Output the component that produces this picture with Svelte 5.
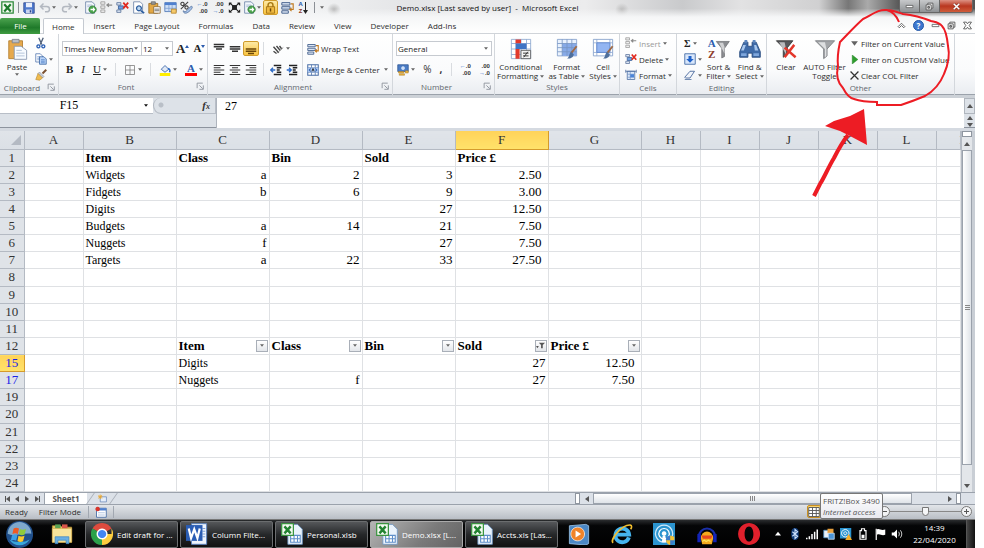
<script lang="ts">
  type Shape = [d: string, fill: string, stroke?: string, width?: number];

  // Every glyph is drawn on a 16 x 16 grid.
  const icons: Record<string, Shape[]> = {
    excel: [
      ['M1 1h14v14H1z', '#f4faf1', '#2f8a3c', 1.6],
      ['M4 4l8 9M12 4l-8 9', 'none', '#1d7a2c', 2.6],
    ],
    save: [
      ['M1 1h14v14H3l-2-2z', '#4d78cc', '#2b4489', 1],
      ['M4 1h8v6H4z', '#e9eefb'],
      ['M4 10h8v5H4z', '#c9d4ee'],
      ['M9 11h2v3H9z', '#2b4489'],
    ],
    undo: [['M3 6h7a4 3.500 0 0 1 0 7H8M6 2L2 6l4 4', 'none', '#b3b8c0', 2]],
    redo: [['M13 6H6a4 3.500 0 0 0 0 7h2M10 2l4 4-4 4', 'none', '#b3b8c0', 2]],
    refresh: [
      ['M2 1h8l3 3v11H2z', '#f3f7fc', '#6a83a6', 1],
      ['M4 5h6M4 7h6', 'none', '#9fb2cc', 1],
      ['M10.500 6a4.500 4.500 0 1 0 .1 0z', '#4aa44b', '#2e7c33', 1],
      ['M8 9.500h3V7.500l3 3-3 3v-2H8z', '#fff'],
    ],
    insert: [
      ['M1 1h5v3H1zM1 6h5v3H1zM1 11h5v3H1z', '#eee', '#9a9a9a', 1],
      ['M15 5H9M11 3L8.500 5l2.500 2', 'none', '#8a8a8a', 1.5],
    ],
    remove: [
      ['M1 2h5v3H1zM1 11h5v3H1z', '#dbe6f5', '#5b7299', 1],
      ['M3 6h6v4H3z', '#6fa0e0', '#385d95', 1],
      ['M9 2l6 7M15 2L9 9', 'none', '#e0281e', 2.2],
    ],
    preview: [
      ['M2 1h8l3 3v11H2z', '#fff', '#6a83a6', 1],
      ['M8.500 6a3 3 0 1 0 .1 0z', '#bcd8f2', '#2f5f9f', 1.6],
      ['M11 12l4 3', 'none', '#2f5f9f', 2],
    ],
    pasteSpecial: [
      ['M1 3h11v12H1z', '#e2a744', '#9b6a1d', 1],
      ['M4 1h5v3H4z', '#9c9c9c', '#666', 1],
      ['M7 7h8v8H7z', '#fff', '#8a6630', 1],
      ['M8 10h6M8 12h6', 'none', '#555', 1],
    ],
    format: [
      ['M1 2h14v11H1z', '#cfe0f7', '#4a74b5', 1],
      ['M1 2h14v3H1z', '#4f80cf'],
      ['M1 9h14M6 5v8M10 5v8', 'none', '#7f9fd1', 1],
      ['M9 10h6v5H9z', '#f5c96b', '#b78424', 1],
    ],
    percentStyle: [
      ['M3 1.500a2 2 0 1 0 .1 0zM8 6a2 2 0 1 0 .1 0zM10 1L1 10', 'none', '#444', 1.4],
      ['M4 12c3 3 5-1 7-3s3-3 4-2c1 2-5 8-8 8-2 0-3-1-3-3z', '#a9c3e8', '#53719f', 1],
    ],
    fit: [
      ['M5 5h6v6H5z', '#222'],
      ['M2 2l12 12M14 2L2 14', 'none', '#222', 1.5],
      ['M1 2h4L1 6zM15 2v4l-4-4zM1 14v-4l4 4zM15 14h-4l4-4z', '#222'],
    ],
    lock: [
      ['M5 8V5a3 3 0 0 1 6 0v3', 'none', '#a87812', 1.8],
      ['M3 7h10v8H3z', '#eeb840', '#9a6a10', 1],
      ['M8 9v4', 'none', '#70490a', 1.8],
    ],
    wrap: [
      ['M1 2h10v3H1zM1 7h10v3H1zM1 12h8v3H1z', '#dbe6f5', '#49648f', 1.2],
      ['M12 3.500h3v7h-3M13 8.500l-2 2 2 2', 'none', '#c0791e', 1.4],
    ],
    merge: [
      ['M1 1h14v14H1z', '#fff', '#4a6fa8', 1.4],
      ['M1 5h14M1 11h14M6 1v4M11 1v4M6 11v4M11 11v4', 'none', '#4a6fa8', 1],
      ['M1 5h14v6H1z', '#a9c6f0'],
      ['M5 6L3 8l2 2M11 6l2 2-2 2', 'none', '#2c5cae', 1.4],
      ['M6.500 10L8 6l1.500 4', 'none', '#222', 1.2],
    ],
    paste: [
      ['M2 2h10v13H2z', '#e6a94d', '#b07a29', .6],
      ['M4.500 1h5v2.500h-5z', '#b9bec7', '#7c828d', .6],
      ['M6 6h5l4 3v6.500H6z', '#f7fbff', '#8192ad', .6],
      ['M7.500 9h4M7.500 11h6M7.500 13h6', 'none', '#b3c4da', .7],
    ],
    cut: [
      ['M5 1l4 9M11 1L7 10', 'none', '#4f5f78', 1.8],
      ['M4.500 10.500a2 2 0 1 0 .1 0zM11 10.500a2 2 0 1 0 .1 0z', 'none', '#2f62b5', 1.8],
    ],
    copy: [
      ['M1 1h6l3 3v8H1z', '#fff', '#4c72ac', 1],
      ['M3 5h4M3 7h4M3 9h4', 'none', '#6e93cc', 1],
      ['M6 5h6l3 3v7H6z', '#b9d3f7', '#34609f', 1],
      ['M8 9h5M8 11h5M8 13h5', 'none', '#4f7fc6', 1],
    ],
    painter: [
      ['M10 6l5-5', 'none', '#7a5132', 2.6],
      ['M6 4l6 6-2 2-6-6z', '#c7ccd6', '#7e8592', .7],
      ['M4 6l6 6-4 3-5-1z', '#f0bc4f', '#b17d1c', .7],
    ],
    top: [['M1 2h14M1 5h14M4 8h8', 'none', '#333', 1.7]],
    middle: [['M1 5h14M1 8h14M4 11h8', 'none', '#333', 1.7]],
    bottom: [['M1 8h14M1 11h14M4 14h8', 'none', '#6b4708', 1.7]],
    left: [['M1 2h14M1 5h9M1 8h14M1 11h9M1 14h14', 'none', '#333', 1.5]],
    center: [['M1 2h14M4 5h8M1 8h14M4 11h8M1 14h14', 'none', '#333', 1.5]],
    right: [['M1 2h14M6 5h9M1 8h14M6 11h9M1 14h14', 'none', '#333', 1.5]],
    outdent: [
      ['M5 2h10M9 5h6M9 8h4M9 11h6M5 14h10', 'none', '#222', 1.8],
      ['M7 8H1M4 5L1 8l3 3', 'none', '#2c69c4', 1.8],
    ],
    indent: [
      ['M4 2h11M9 5h6M9 8h4M9 11h6M4 14h11', 'none', '#222', 1.8],
      ['M1 8h6M4 5l3 3-3 3', 'none', '#2c69c4', 1.8],
    ],
    orient: [
      ['M2 11l4 3M2 5l7 8M6 4l5 6M10 4l3 4', 'none', '#444', 1.8],
      ['M6 14l9-8', 'none', '#888', 1.2],
    ],
    borders: [['M2 2h12v12H2zM8 2v12M2 8h12', 'none', '#777', 1]],
    fill: [
      ['M3 7l5-5 5 5-5 4z', '#dfe8f5', '#3f69a9', 1.2],
      ['M12 6c3 1 3 3 2 5', 'none', '#2c69c4', 2],
      ['M1 12h14v4H1z', '#ffee00'],
    ],
    money: [
      ['M1 1h14v9H1z', '#4a7cc4', '#2a5391', 1],
      ['M8 3a2.500 2.500 0 1 0 .1 0z', '#cfe0f7'],
      ['M2 10h7v2H2zM3 13h7v2H3z', '#eab544', '#a87414', .6],
      ['M11 9h4v3h-4z', '#eab544', '#a87414', .6],
    ],
    conditional: [
      ['M1 1h14v14H1z', '#fff', '#8aa6cf', .6],
      ['M1 4h14M1 8h14M1 12h14M8 1v14M12 1v14', 'none', '#8aa6cf', .6],
      ['M4 1h4v3H4zM4 8h3v7H4z', '#e2392c'],
      ['M4 4h8v4H4z', '#3f74c4'],
      ['M8 9h7v6H8z', '#f4f4f4', '#555', .6],
      ['M9.500 11h4M9.500 13h4M13 10l-3 4', 'none', '#333', .7],
    ],
    table: [
      ['M1 1h14v12H1z', '#eaf2fd', '#7f9dc8', .6],
      ['M4.500 4h10.500v9H4.500z', '#87aae8'],
      ['M1 4h14M1 7h14M1 10h14M4.500 1v12M8 1v12M11.500 1v12', 'none', '#7795c4', .6],
      ['M15 6l-4 5', 'none', '#a06a45', 1.4],
      ['M11 10l2 2c-1 3-3 3-5 3 2-1 1-3 3-5z', '#4e6f9c'],
    ],
    cell: [
      ['M1 1h14v12H1z', '#fff', '#7f9dc8', .6],
      ['M1 3.500h14M1 10.500h14M3.500 1v12M13 1v12', 'none', '#8fa9d2', .6],
      ['M3.500 3.500h9.500v7H3.500z', '#93b5f2', '#5e86cc', .6],
      ['M15 6l-4 5', 'none', '#a06a45', 1.4],
      ['M11 10l2 2c-1 3-3 3-5 3 2-1 1-3 3-5z', '#4e6f9c'],
    ],
    cellFormat: [
      ['M3 3h10v11H3z', '#dce9fa', '#46689c', 1],
      ['M3 7h10M3 11h10M7 3v11', 'none', '#7898c8', 1],
      ['M7 7h5v4H7z', '#4b85d9'],
      ['M1 1v4M15 1v4M1 3h14', 'none', '#46689c', 1],
    ],
    down: [
      ['M1 1h14v14H1z', '#d9e7fb', '#4a6fa8', 1.2],
      ['M6 4h4v4h3l-5 5-5-5h3z', '#1f62ca'],
    ],
    eraser: [
      ['M1 11l7-8h6l-6 9H2z', '#f3f6fb', '#47689c', 1.2],
      ['M1 14h9', 'none', '#47689c', 1],
    ],
    funnel: [
      ['M1 2h14l-5.500 6v5L7 15V8z', '#a3a5a8', '#77797d', .6],
      ['M3 3h5l1 5v5l-1 1V8z', '#dedfe1'],
    ],
    filterOn: [['M5 3h11l-4 4v6h-3V7zM0 9h5l-2.500 4z', '#555']],
    clearFunnel: [
      ['M1 2h12L9 7v5l-3 2V7z', '#56585c', '#333', .6],
      ['M3 3h4l1 5v4z', '#b9babd'],
      ['M7 7l8 7M14 5l-7 9', 'none', '#e3372b', 1.8],
    ],
    sortFunnel: [
      ['M6 2.500h9.500L12 7.500v6l-2 1v-7z', '#8b8d91', '#696b6f', .5],
      ['M8 3.500h3l1 3v5z', '#d0d1d3'],
    ],
    find: [
      ['M3.500 3h3v3h3V3h3l3 7v4H9.500v-3h-3v3H.5v-4z', '#3f6ba8', '#274a7c', .6],
      ['M3 5h2L3.500 9h-2zM11 5h1.500L14 9h-2.500z', '#a9c8ee'],
      ['M1.500 11h4v2h-4zM10.500 11h4v2h-4z', '#7fa7dc'],
      ['M4 1.500h2v2H4zM10 1.500h2v2h-2z', '#5d87c0'],
    ],
    grayArrow: [['M2 4h12l-6 8z', '#636363']],
    play: [['M4 0l10 8-10 8z', '#2f9e2f', '#1e7a20', .8]],
    cross: [['M1 1l14 14M15 1L1 15', 'none', '#333', 2.2]],
    launcher: [
      ['M2 11V2h10', 'none', '#8c929b', 1.6],
      ['M6 6l6 6M13 6v7H6', 'none', '#8c929b', 1.6],
    ],
    newSheet: [
      ['M4 5h11v9H4z', '#e5eefb', '#5d7db0', 1.2],
      ['M4 1v8M0 5h8M1 2l6 6M7 2L1 8', 'none', '#eca72c', 1.5],
    ],
    record: [
      ['M2 3h13v12H2z', '#fff', '#4a6fa8', 1.2],
      ['M2 3h13v3H2z', '#4f80cf'],
      ['M4 9h9M4 12h9', 'none', '#9db6da', 1],
      ['M3.500 1a3 3 0 1 0 .1 0z', '#d9352a'],
    ],
    gridView: [['M1 2h14v12H1zM1 6h14M1 10h14M6 2v12M11 2v12', '#fff', '#555', 1.2]],
    folder: [
      ['M1 2h6l1 1h7v11H1z', '#e9c765', '#c29a38', .5],
      ['M3 1h4v4H3z', '#5aa152'],
      ['M8 1h4v4H8z', '#d8564a'],
      ['M1 4h14v10H1z', '#f8e49b', '#d3ae52', .5],
      ['M3 15v-5h10v5h-2v-2.500H5V15z', '#69afe2', '#3a83bd', .5],
    ],
    orb: [
      ['M8 0a8 8 0 1 0 .1 0z', '#20508c'],
      ['M8 .6a7.200 7.200 0 0 0-7 7c4 2 10-1 14 0a7.200 7.200 0 0 0-7-7z', '#7fa9cc'],
      ['M2 11a7 7 0 0 0 12 0c-3 2-9 2-12 0z', '#37a6dc'],
      ['M4.500 4.500c1-.7 2-.6 3.200 0L7 7.700c-1-.6-2-.6-3.200 0z', '#ee5a24'],
      ['M8.300 4.800c1 .6 2.200.6 3.600 0l-.9 3.200c-1.200.6-2.200.5-3.300-.1z', '#8fcb3b'],
      ['M3.600 8.500c1-.7 2-.6 3.200 0L6 11.700c-1-.6-2-.6-3.200 0z', '#3aa0e8'],
      ['M7.400 8.800c1 .6 2.200.6 3.600 0l-.9 3.200c-1.200.6-2.200.5-3.300-.1z', '#fbc92c'],
    ],
    chrome: [
      ['M8 8L1.070 4A8 8 0 0 1 14.930 4z', '#dd4b3e'],
      ['M8 8h6.930V4A8 8 0 0 1 8 16z', '#fccd3f'],
      ['M8 8v8A8 8 0 0 1 1.070 4z', '#2ba14b'],
      ['M8 4a4 4 0 1 0 .1 0z', '#fff'],
      ['M8 5a3 3 0 1 0 .1 0z', '#4285f4'],
    ],
    word: [
      ['M4 .5h11v15H4z', '#eef4fd', '#5c83bf', .7],
      ['M12 4h2M12 6h2M12 8h2M12 10h2', 'none', '#7da1d8', .8],
      ['M0 1.500h12v11.500H0z', '#2a5db4'],
      ['M2 4l1.700 7 2.300-6.500 2.300 6.500L10 4', 'none', '#fff', 1.6],
    ],
    book: [
      ['M5 1h7l3.500 3.500v11H5z', '#eaf3fc', '#6f97c4', .6],
      ['M7 9h7v5H7zM7 11.500h7M9.500 9v5M12 9v5', '#fff', '#5f8fc9', .8],
      ['M.5.500h8.500V9H.500z', '#f4faf1', '#3b9440', .9],
      ['M2.500 2.500l4.500 5M7 2.500L2.500 7.500', 'none', '#238331', 1.8],
    ],
    player: [
      ['M1 2l12-1 2 1v13l-2 1-12-1z', '#4b87c4', '#9cc4e8', .6],
      ['M7 3a5 5 0 1 0 .1 0z', '#f0832a', '#fff', .5],
      ['M5.500 5.500l4 2.500-4 2.500z', '#fff'],
    ],
    ie: [
      ['M13 10.500A5 5 0 1 1 13.200 8.500H4', 'none', '#45b4ee', 2.8],
      ['M1.500 14.500C-1 12 8 1 14 1.500c1.500.3 1 2 .3 3', 'none', '#f3bf2f', 1.2],
    ],
    podcast: [
      ['M0 0h16v16H0z', '#2b94cf'],
      ['M8 1.500a6.200 6.200 0 1 0 .1 0z', 'none', '#cfeafb', .9],
      ['M8 4a3.800 3.800 0 1 0 .1 0z', 'none', '#fff', .9],
      ['M8 6a1.700 1.700 0 1 0 .1 0zM7 9.500h2l.6 4.500H6.400z', '#fff'],
      ['M12.500 9l3 1v2.500c0 2-1.500 3-3 3.500-1.500-.5-3-1.500-3-3.500V10z', '#3d7cc9'],
      ['M12.500 9l3 1v2.500h-3zM9.500 12.500h3V16c-1.500-.5-3-1.500-3-3.500z', '#f3c437'],
    ],
    audacity: [
      ['M2 10a6 6 0 0 1 12 0', 'none', '#1a2fa8', 1.6],
      ['M3.500 11a4.500 4.800 0 0 1 9 0l-1 4.500h-7z', '#f5a91d'],
      ['M4 9h8l-1 2.500H5z', '#e8471e'],
      ['M4.500 13.500l1.500-1 1.500 1 1.500-1 1.500 1', 'none', '#ffe25c', .8],
      ['M1 8h2.500v6H1zM12.500 8H15v6h-2.500z', '#1323b8'],
    ],
    opera: [
      ['M8 0a8 8 0 1 0 .1 0zM8 2.500c2 0 3.200 2.500 3.200 5.500S10 13.500 8 13.500 4.800 11 4.800 8 6 2.500 8 2.500z', '#e0202c'],
    ],
    caretUp: [['M4 10l4-5 4 5z', '#fff']],
    bluetooth: [
      ['M8 0c4 0 5 3 5 8s-1 8-5 8-5-3-5-8 1-8 5-8z', '#123c78'],
      ['M4.500 5l7 6L8 14V2l3.500 3-7 6', 'none', '#cfe4ff', 1.4],
    ],
    signal: [['M0 13h2v2H0zM3.500 11h2v4h-2zM7 8h2v7H7zM10.500 5h2v10h-2zM14 2h2v13h-2z', '#fff']],
    updater: [
      ['M1 3h9v10H1z', '#eaf2fa', '#4a90c8', 1],
      ['M6 1h8v6H6z', '#e9a03d'],
      ['M7 7h8v8H7z', '#4b93d6', '#d5e9f8', 1],
    ],
    podcastWarn: [
      ['M0 0h15v14H0z', '#2b94cf'],
      ['M7 2a5 5 0 1 0 .1 0zM7 5a2 2 0 1 0 .1 0z', 'none', '#fff', 1.2],
      ['M11.500 8l4.500 8H7z', '#f6ae26'],
    ],
    battery: [
      ['M4 3.500h2V1h4v2.500h2V15H4z', 'none', '#fff', 1.6],
      ['M6 9h4v4.500H6z', '#fff'],
    ],
    flag: [
      ['M3 1v15', 'none', '#fff', 1.6],
      ['M4 2c3-2 5 2 11 0v7c-5 2-7-2-11 0z', '#fff'],
    ],
    speaker: [
      ['M1 6h3l4-4v12l-4-4H1z', '#fff'],
      ['M10 5c1.500 2 1.500 4 0 6M12.500 3c2.500 3 2.500 7 0 10', 'none', '#ddd', 1.2],
    ],
    min: [['M2 6h12v4H2z', '#fff', '#555', 1.4]],
    restore: [
      ['M5 2h9v9H5z', '#fff', '#555', 1.6],
      ['M2 5h9v9H2zM5 8h3v3H5z', '#fff', '#555', 1.6],
    ],
    close: [
      ['M3 3l10 10M13 3L3 13', 'none', '#7e2b20', 4.5],
      ['M3 3l10 10M13 3L3 13', 'none', '#fff', 2.8],
    ],
    collapse: [['M2 10l6-6 6 6-2 2-4-4-4 4z', '#fff', '#444', 1.4]],
    closeDoc: [['M1 2h5l2 3 2-3h5l-4 6 4 6h-5l-2-3-2 3H1l4-6z', '#fff', '#444', 1.4]],
  };

  const quickTools = ['refresh', 'insert', 'remove', 'preview', 'pasteSpecial', 'format', 'percentStyle'];
  const tabs = ['Insert', 'Page Layout', 'Formulas', 'Data', 'Review', 'View', 'Developer', 'Add-Ins'];
  const columns = ['A', 'B', 'C', 'D', 'E', 'F', 'G', 'H', 'I', 'J', 'K', 'L', 'M'];
  const rowNumbers = [1, 2, 3, 4, 5, 6, 7, 8, 9, 10, 11, 12, 15, 17, 19, 20, 21, 22, 23, 24];

  const cells: Record<string, string> = {
    B1: 'Item', C1: 'Class', D1: 'Bin', E1: 'Sold', F1: 'Price £',
    B2: 'Widgets', C2: 'a', D2: '2', E2: '3', F2: '2.50',
    B3: 'Fidgets', C3: 'b', D3: '6', E3: '9', F3: '3.00',
    B4: 'Digits', E4: '27', F4: '12.50',
    B5: 'Budgets', C5: 'a', D5: '14', E5: '21', F5: '7.50',
    B6: 'Nuggets', C6: 'f', E6: '27', F6: '7.50',
    B7: 'Targets', C7: 'a', D7: '22', E7: '33', F7: '27.50',
    C12: 'Item', D12: 'Class', E12: 'Bin', F12: 'Sold', G12: 'Price £',
    C15: 'Digits', F15: '27', G15: '12.50',
    C17: 'Nuggets', D17: 'f', F17: '27', G17: '7.50',
  };

  const windows = [
    { icon: 'chrome', label: 'Edit draft for ...' },
    { icon: 'word', label: 'Column Filte...' },
    { icon: 'book', label: 'Personal.xlsb' },
    { icon: 'book', label: 'Demo.xlsx [L...', active: true },
    { icon: 'book', label: 'Accts.xls [Las...' },
  ];
  const pinned = ['player', 'ie', 'podcast', 'audacity', 'opera'];
  const tray = ['caretUp', 'bluetooth', 'signal', 'updater', 'podcastWarn', 'battery', 'flag', 'speaker'];

  let nameBox = $state('F15');
  let formula = $state('27');
  let zoom = $state(50);

  const isHeading = (row: number) => row === 1 || row === 12;
  const isItem = (text: string) => text.length > 4 && /^[A-Z]/.test(text);
  const isPrice = (text: string) => text.includes('.');
  const isNumber = (row: number, text: string) => !isHeading(row) && !isItem(text);
</script>

{#snippet icon(name: string, size = 's')}
  <svg class="icon {size}" viewBox="0 0 16 16" aria-hidden="true">
    {#each icons[name] as [d, fill, stroke, width]}
      <path {d} {fill} {stroke} stroke-width={width} fill-rule="evenodd" />
    {/each}
  </svg>
{/snippet}

{#snippet caret()}
  <svg class="caret" viewBox="0 0 5 3" aria-hidden="true"><path d="M0 0h5L2.500 3z" fill="currentColor" /></svg>
{/snippet}

{#snippet groupLabel(text: string, launcher = false)}
  <div class="group-label">
    <span>{text}</span>
    {#if launcher}<button type="button" aria-label="{text} options">{@render icon('launcher', 'xs')}</button>{/if}
  </div>
{/snippet}

{#snippet decimals(first: string, second: string)}
  <span class="decimals"><span><b>{first.slice(0, 1)}</b>{first.slice(1)}</span><span><b>{second.slice(0, 1)}</b>{second.slice(1)}</span></span>
{/snippet}

<div class="screen">
  <header class="titlebar">
    <div class="quick">
      {@render icon('excel', 'm')}
      <i class="bar"></i>
      <button type="button" aria-label="Save">{@render icon('save')}</button>
      <button type="button" class="faded" aria-label="Undo">{@render icon('undo')}{@render caret()}</button>
      <button type="button" class="faded" aria-label="Redo">{@render icon('redo')}{@render caret()}</button>
      <div class="tools">
        {#each quickTools as tool}
          <button type="button" aria-label={tool}>{@render icon(tool, 'm')}</button>
        {/each}
        <button type="button" aria-label="Increase decimal">{@render decimals('←.0', ' .00')}</button>
        <button type="button" aria-label="Decrease decimal">{@render decimals(' .00', '→.0')}</button>
        <button type="button" aria-label="Zoom to fit">{@render icon('fit', 'm')}</button>
        <button type="button" aria-label="Refresh all">{@render icon('refresh', 'm')}{@render caret()}</button>
        <button type="button" class="on" aria-label="Lock cell">{@render icon('lock', 'm')}</button>
        <button type="button" aria-label="Wrap">{@render icon('wrap', 'm')}</button>
        <button type="button" class="az" aria-label="Sort ascending">
          <span><b>A</b><b>Z</b></span>
          <svg viewBox="0 0 5 12" aria-hidden="true"><path d="M2 0h1v8h2L2.500 12 0 8h2z" fill="#222" /></svg>
        </button>
      </div>
      <i class="bar"></i>
      <button type="button" aria-label="Customise toolbar">{@render caret()}</button>
    </div>
    <h1>Demo.xlsx [Last saved by user]&nbsp; -&nbsp; Microsoft Excel</h1>
    <div class="controls">
      <button type="button" aria-label="Minimise">{@render icon('min', 'xs')}</button>
      <button type="button" aria-label="Restore">{@render icon('restore', 'xs')}</button>
      <button type="button" class="close" aria-label="Close">{@render icon('close', 'xs')}</button>
    </div>
  </header>

  <nav class="tabs">
    <button type="button" class="file">File</button>
    <button type="button" class="current">Home</button>
    {#each tabs as tab}
      <button type="button">{tab}</button>
    {/each}
    <div class="doc-controls">
      <button type="button" aria-label="Collapse ribbon">{@render icon('collapse', 'xs')}</button>
      <button type="button" class="help" aria-label="Help">?</button>
      <button type="button" aria-label="Minimise workbook">{@render icon('min', 'xs')}</button>
      <button type="button" aria-label="Restore workbook">{@render icon('restore', 'xs')}</button>
      <button type="button" aria-label="Close workbook">{@render icon('closeDoc', 'xs')}</button>
    </div>
  </nav>

  <section class="ribbon">
    <div class="group clipboard">
      <div class="body">
        <button type="button" class="big">{@render icon('paste', 'l')}<span>Paste</span>{@render caret()}</button>
        <div class="stack">
          <button type="button" aria-label="Cut">{@render icon('cut')}</button>
          <button type="button" aria-label="Copy">{@render icon('copy')}{@render caret()}</button>
          <button type="button" aria-label="Format painter">{@render icon('painter')}</button>
        </div>
      </div>
      {@render groupLabel('Clipboard', true)}
    </div>

    <div class="group font">
      <div class="body rows">
        <div class="row">
          <div class="combo family">
            <select aria-label="Font"><option>Times New Roman</option></select>{@render caret()}
          </div>
          <div class="combo size">
            <select aria-label="Font size"><option>12</option></select>{@render caret()}
          </div>
          <button type="button" class="letter grow" aria-label="Grow font">A<svg viewBox="0 0 4 8" aria-hidden="true"><path d="M0 3l2-3 2 3z" fill="#2c5cae" /></svg></button>
          <button type="button" class="letter shrink" aria-label="Shrink font">A<svg viewBox="0 0 4 8" aria-hidden="true"><path d="M0 0h4L2 3z" fill="#2c5cae" /></svg></button>
        </div>
        <div class="row spread">
          <button type="button" class="letter"><b>B</b></button>
          <button type="button" class="letter"><em>I</em></button>
          <button type="button" class="letter"><u>U</u>{@render caret()}</button>
          <i class="rule"></i>
          <button type="button" aria-label="Borders">{@render icon('borders')}{@render caret()}</button>
          <i class="rule"></i>
          <button type="button" aria-label="Fill colour">{@render icon('fill')}{@render caret()}</button>
          <button type="button" class="letter"><span class="colour">A</span>{@render caret()}</button>
        </div>
      </div>
      {@render groupLabel('Font', true)}
    </div>

    <div class="group alignment">
      <div class="body">
        <div class="rows aligns">
          <div class="row">
            <button type="button" class="sq" aria-label="Top align">{@render icon('top')}</button>
            <button type="button" class="sq" aria-label="Middle align">{@render icon('middle')}</button>
            <button type="button" class="sq on" aria-label="Bottom align">{@render icon('bottom')}</button>
            <i class="rule"></i>
            <button type="button" class="sq wide" aria-label="Orientation">{@render icon('orient')}{@render caret()}</button>
          </div>
          <div class="row">
            <button type="button" class="sq" aria-label="Align left">{@render icon('left')}</button>
            <button type="button" class="sq" aria-label="Centre">{@render icon('center')}</button>
            <button type="button" class="sq" aria-label="Align right">{@render icon('right')}</button>
            <i class="rule"></i>
            <button type="button" class="sq" aria-label="Decrease indent">{@render icon('outdent')}</button>
            <button type="button" class="sq" aria-label="Increase indent">{@render icon('indent')}</button>
          </div>
        </div>
        <div class="rows wraps">
          <button type="button" class="row">{@render icon('wrap')}Wrap Text</button>
          <button type="button" class="row">{@render icon('merge')}Merge &amp; Center{@render caret()}</button>
        </div>
      </div>
      {@render groupLabel('Alignment', true)}
    </div>

    <div class="group number">
      <div class="body rows">
        <div class="row">
          <div class="combo full">
            <select aria-label="Number format"><option>General</option></select>{@render caret()}
          </div>
        </div>
        <div class="row spread">
          <button type="button" aria-label="Accounting format">{@render icon('money')}{@render caret()}</button>
          <button type="button" class="symbol">%</button>
          <button type="button" class="symbol"><b>,</b></button>
          <i class="rule"></i>
          <button type="button" aria-label="Increase decimal">{@render decimals('←.0', ' .00')}</button>
          <button type="button" aria-label="Decrease decimal">{@render decimals(' .00', '→.0')}</button>
        </div>
      </div>
      {@render groupLabel('Number', true)}
    </div>

    <div class="group styles">
      <div class="body">
        <button type="button" class="big">{@render icon('conditional', 'l')}<span>Conditional<br />Formatting {@render caret()}</span></button>
        <button type="button" class="big">{@render icon('table', 'l')}<span>Format<br />as Table {@render caret()}</span></button>
        <button type="button" class="big">{@render icon('cell', 'l')}<span>Cell<br />Styles {@render caret()}</span></button>
      </div>
      {@render groupLabel('Styles')}
    </div>

    <div class="group cells">
      <div class="body stack">
        <button type="button" class="faded">{@render icon('insert')}Insert {@render caret()}</button>
        <button type="button">{@render icon('remove')}Delete {@render caret()}</button>
        <button type="button">{@render icon('cellFormat')}Format {@render caret()}</button>
      </div>
      {@render groupLabel('Cells')}
    </div>

    <div class="group editing">
      <div class="body">
        <div class="stack">
          <button type="button" class="sigma"><b>Σ</b>{@render caret()}</button>
          <button type="button" aria-label="Fill">{@render icon('down')}{@render caret()}</button>
          <button type="button" aria-label="Clear contents">{@render icon('eraser')}{@render caret()}</button>
        </div>
        <button type="button" class="big">
          <span class="sort"><span class="sort-letters"><b>A</b><b>Z</b></span>{@render icon('sortFunnel', 'l')}</span>
          <span>Sort &amp;<br />Filter {@render caret()}</span>
        </button>
        <button type="button" class="big">{@render icon('find', 'l')}<span>Find &amp;<br />Select {@render caret()}</span></button>
      </div>
      {@render groupLabel('Editing')}
    </div>

    <div class="group other">
      <div class="body">
        <button type="button" class="big">{@render icon('clearFunnel', 'l')}<span>Clear</span></button>
        <button type="button" class="big">{@render icon('funnel', 'l')}<span>AUTO Filter<br />Toggle</span></button>
        <div class="stack">
          <button type="button">{@render icon('grayArrow', 'xs')}Filter on Current Value</button>
          <button type="button">{@render icon('play', 'xs')}Filter on CUSTOM Value</button>
          <button type="button">{@render icon('cross', 'xs')}Clear COL Filter</button>
        </div>
      </div>
      {@render groupLabel('Other')}
    </div>
  </section>

  <section class="formula-bar">
    <div class="name-box">
      <input aria-label="Name box" bind:value={nameBox} />
      <button type="button" aria-label="Named ranges">{@render caret()}</button>
    </div>
    <div class="fx"><i class="knob"></i><button type="button"><em>f<small>x</small></em></button></div>
    <input class="formula" aria-label="Formula" bind:value={formula} />
    <div class="spin">
      <button type="button" class="collapse" aria-label="Collapse formula bar"><span class="tri up"></span></button>
      <button type="button" aria-label="Previous line"><span class="tri up"></span></button>
      <button type="button" aria-label="Next line"><span class="tri down"></span></button>
    </div>
  </section>

  <main class="workbook">
    <table>
      <colgroup>
        <col class="c-head" />
        {#each columns as column}
          <col class={'BCDEFG'.includes(column) ? 'c-wide' : column === 'M' ? '' : 'c-narrow'} />
        {/each}
      </colgroup>
      <thead>
        <tr>
          <th class="corner"><i></i></th>
          {#each columns as column}
            <th class:picked={column === 'F'} class:partial={column === 'M'}>{column}</th>
          {/each}
        </tr>
      </thead>
      <tbody>
        {#each rowNumbers as row}
          <tr>
            <th class:picked={row === 15} class:filtered={row === 15 || row === 17}>{row}</th>
            {#each columns as column}
              {@const text = cells[column + row] ?? ''}
              <td
                class:heading={isHeading(row)}
                class:num={isNumber(row, text)}
                class:price={isPrice(text)}
                class:item={isItem(text) && !isHeading(row)}
              >
                {#if row === 12 && text}
                  <div class="filter-head">
                    {text}
                    <button type="button" aria-label="Filter {text}">
                      {#if text === 'Sold'}{@render icon('filterOn', 'xs')}{:else}{@render caret()}{/if}
                    </button>
                  </div>
                {:else}{text}{/if}
              </td>
            {/each}
          </tr>
        {/each}
      </tbody>
    </table>
    <div class="vscroll">
      <i class="split"></i>
      <button type="button" aria-label="Scroll up"><span class="tri up"></span></button>
      <div class="thumb"><i></i></div>
      <button type="button" aria-label="Scroll down"><span class="tri down"></span></button>
    </div>
  </main>

  <div class="sheet-bar">
    <div class="sheet-nav">
      <button type="button" aria-label="First sheet"><i></i><span class="tri left"></span></button>
      <button type="button" aria-label="Previous sheet"><span class="tri left"></span></button>
      <button type="button" aria-label="Next sheet"><span class="tri right"></span></button>
      <button type="button" aria-label="Last sheet"><span class="tri right"></span><i></i></button>
    </div>
    <button type="button" class="sheet">Sheet1</button>
    <button type="button" class="new-sheet" aria-label="New sheet">{@render icon('newSheet', 'xs')}</button>
    <div class="hscroll">
      <i class="split"></i>
      <button type="button" aria-label="Scroll left"><span class="tri left"></span></button>
      <div class="track"><div class="thumb"><i></i></div></div>
      <button type="button" aria-label="Scroll right"><span class="tri right"></span></button>
      <i class="split"></i>
    </div>
  </div>

  <div class="status">
    <span>Ready</span>
    <span>Filter Mode</span>
    <button type="button" class="macro" aria-label="Record macro">{@render icon('record')}</button>
    <div class="zoom">
      <button type="button" class="view" aria-label="Normal view">{@render icon('gridView')}</button>
      <button type="button" class="round" aria-label="Zoom out">
        <svg viewBox="0 0 9 9" aria-hidden="true"><path d="M2 4h5v1H2z" fill="#555" /></svg>
      </button>
      <input type="range" aria-label="Zoom" bind:value={zoom} />
      <button type="button" class="round" aria-label="Zoom in">
        <svg viewBox="0 0 9 9" aria-hidden="true"><path d="M2 4h5v1H2zM4 2h1v5H4z" fill="#555" /></svg>
      </button>
      <div class="tooltip" role="tooltip">FRITZ!Box 3490<br /><em>Internet access</em></div>
    </div>
  </div>

  <footer class="taskbar">
    <button type="button" class="start" aria-label="Start">{@render icon('orb', 'xl')}</button>
    <button type="button" class="explorer" aria-label="Explorer">{@render icon('folder', 'l')}</button>
    <div class="windows">
      {#each windows as win}
        <button type="button" class:active={win.active}>{@render icon(win.icon, 'l')}<span>{win.label}</span></button>
      {/each}
    </div>
    <div class="pinned">
      {#each pinned as app}
        <button type="button" aria-label={app}>{@render icon(app, 'l')}</button>
      {/each}
    </div>
    <div class="tray">
      {#each tray as item}
        <button type="button" aria-label={item}>{@render icon(item, 's')}</button>
      {/each}
    </div>
    <time>14:39<br />22/04/2020</time>
    <button type="button" class="desktop" aria-label="Show desktop"></button>
  </footer>

  <!-- Hand-drawn marker around the filter commands -->
  <svg class="marker" viewBox="808 0 147 204" aria-hidden="true">
    <path
      d="M899 22C897 17 894 12 887 10C879 9 873 14 863 19C854 27 846 36 840 42C838 51 837 57 838 66C836 75 838 83 843 88C846 94 849 98 854 99C862 102 869 102 877 102V105H901C910 102 918 99 925 96C934 91 940 84 944 74C948 65 950 55 948 46C947 36 945 29 942 26C939 22 935 22 931 21C921 17 912 15 903 14C897 12 892 10 887 10"
      fill="none" stroke="#ed1c24" stroke-width="2"
    />
    <path d="M825 126L834 121L850 116L864 109L867 145L850 136L840 131z" fill="#ed1c24" />
    <path d="M848 135C841 144 838 150 834 158C828 168 824 178 820 184L814 196" fill="none" stroke="#ed1c24" stroke-width="4" />
  </svg>
</div>

<style>
  :global(body) { margin: 0; background: #fff; }
  :global(*) { box-sizing: border-box; }

  .screen {
    position: relative; display: flex; flex-direction: column; min-height: 100vh; padding-right: 9px;
    font-family: "Open Sans", "Noto Sans", sans-serif; font-size: 8px; line-height: 9px; color: #2e2e2e;
  }
  button, input, select { font: inherit; color: inherit; border: 0; padding: 0; margin: 0; background: none; border-radius: 0; outline: 0; }
  button { display: inline-flex; align-items: center; justify-content: center; white-space: nowrap; }
  .icon { flex: none; display: block; width: 12px; height: 12px; }
  .icon.xs { width: 9px; height: 9px; }
  .icon.m { width: 13px; height: 13px; }
  .icon.l { width: 22px; height: 22px; }
  .icon.xl { width: 27px; height: 27px; }
  .caret { flex: none; width: 4px; height: 3px; color: #666; margin-left: 2px; }
  .faded { color: #999; }

  /* Title bar */
  .titlebar {
    display: grid; grid-template-columns: 1fr auto 1fr; height: 17px;
    background:
      linear-gradient(transparent 50%, #f5f6f7),
      radial-gradient(circle at 334px 10px, #b5b5b5 0, transparent 7px),
      radial-gradient(circle at 622px 10px, #bbb 0, transparent 7px),
      linear-gradient(90deg, #eef0f2 0, #f0f1f2 32%, #e4e5e7 42%, #ececed 60%, #c9cacc 70%, #e2e2e3 76%, #d0d0d1 84%, #777 87%, #aaa 89%, #444 93%, #555);
  }
  .titlebar h1 { margin: 0; font-size: 8px; font-weight: 400; line-height: 15px; color: #111; }
  .quick { display: flex; align-items: center; gap: 4px; padding: 0 0 2px 1px; height: 17px; }
  .bar { width: 1px; height: 11px; background: #8b8f95; }
  .quick .faded { margin-right: 1px; }
  .quick .caret { margin-left: 1px; }
  .tools { display: flex; align-items: center; gap: 2px; }
  .tools button { min-width: 14px; }
  .on { background: linear-gradient(#fde9a5, #f9c43f); border: 1px solid #cf9b2d; border-radius: 2px; }
  .az span { display: grid; font-size: 6px; line-height: 7px; color: #2c5cae; }
  .az b + b { color: #8d3b2a; }
  .az svg { width: 5px; height: 12px; }
  .decimals { display: grid; font: 700 6px/7px "Liberation Sans", sans-serif; color: #333; white-space: pre; text-align: right; }
  .decimals b { color: #2c69c4; }
  .controls { display: flex; justify-self: end; height: 13px; margin-right: 2px; border: 1px solid #666; border-top: 0; border-radius: 0 0 3px 3px; overflow: hidden; }
  .controls button { width: 20px; background: linear-gradient(#c7c9cb, #8f9295); border-right: 1px solid #666; }
  .controls .close { width: 32px; border: 0; background: linear-gradient(#dd9183, #b93720 50%, #cf5c3a); }

  /* Ribbon tabs */
  .tabs { display: flex; height: 17px; padding-top: 1px; background: linear-gradient(#f5f6f7, #fff); border-bottom: 1px solid #d0d4d9; }
  .tabs > button { padding: 0 9px 1px 10px; height: 15px; }
  .tabs .file { width: 40px; height: 16px; margin-right: 3px; color: #fff; background: linear-gradient(#4ca34f, #1f7a2a 60%, #3f9c41); border-radius: 2px 2px 0 0; }
  .tabs .current { height: 16px; padding: 0 8px 1px; background: #fff; border: 1px solid #c5cad1; border-bottom: 0; border-radius: 2px 2px 0 0; }
  .doc-controls { display: flex; align-items: center; gap: 7px; margin-left: auto; padding-right: 3px; }
  .help { width: 11px; height: 11px; border-radius: 50%; background: #3d77cf; border: 1px solid #2458a8; color: #fff; font-weight: 700; }

  /* Ribbon */
  .ribbon { display: flex; height: 64px; background: linear-gradient(#fff, #fafbfc 60%, #e9ecf0); border-bottom: 3px solid #ccd1d7; box-shadow: inset 0 -1px #9ba2ab; }
  .group { display: flex; flex-direction: column; flex: none; border-right: 1px solid #d3d7dc; }
  .body { display: flex; flex: 1; }
  .clipboard { width: 59px; }
  .font { width: 149px; }
  .alignment { width: 185px; }
  .number { width: 102px; }
  .styles { width: 125px; }
  .cells { width: 57px; }
  .editing { width: 90px; }
  .other { width: 188px; }
  .group-label { display: flex; align-items: center; height: 14px; padding-bottom: 3px; color: #62676e; }
  .group-label span { flex: 1; text-align: center; }
  .group-label button { width: 14px; }
  .stack { display: flex; flex-direction: column; align-items: flex-start; padding-top: 1px; }
  .stack button { height: 16px; gap: 2px; }
  .stack .caret { margin-left: 0; }
  .big { flex-direction: column; justify-content: flex-start; padding-top: 4px; gap: 2px; line-height: 9px; text-align: center; }
  .big .caret { display: inline-block; vertical-align: middle; margin-left: 0; }
  .clipboard .big { width: 34px; }
  .clipboard .stack { padding-left: 1px; }
  .rows { display: flex; flex-direction: column; padding-top: 4px; }
  .row { display: flex; align-items: center; justify-content: flex-start; height: 21px; }
  .spread { justify-content: space-between; padding: 0 4px; }
  .rule { width: 1px; height: 13px; background: #d9dce0; }
  .combo { display: grid; align-items: center; height: 15px; border: 1px solid #c6cad0; background: #fff; color: #222; }
  .combo select { grid-area: 1 / 1; width: 100%; appearance: none; padding-left: 1px; }
  .combo .caret { grid-area: 1 / 1; justify-self: end; margin-right: 3px; }
  .font .body { padding-left: 3px; }
  .family { width: 80px; }
  .size { width: 31px; border-left: 0; }
  .full { width: 96px; margin-left: 3px; }
  .letter { font-family: "Liberation Serif", serif; font-size: 11px; color: #222; }
  .letter svg:not(.caret) { width: 4px; height: 8px; }
  .grow { font-size: 13px; font-weight: 700; margin-left: 3px; }
  .shrink { font-weight: 700; margin-left: 4px; }
  .colour { font-weight: 700; color: #2c5cae; border-bottom: 3px solid #f00; padding: 0 2px; line-height: 10px; }
  .aligns { width: 95px; padding-left: 3px; border-right: 1px solid #d9dce0; }
  .sq { width: 16px; height: 15px; }
  .sq.wide { width: 26px; }
  .aligns .rule { margin: 0 4px; }
  .wraps { padding-left: 4px; }
  .wraps .row { gap: 2px; }
  .symbol { font-size: 10px; color: #333; }
  .styles .big { flex: 1 1 auto; padding-left: 2px; padding-right: 2px; }
  .cells .stack { padding-left: 5px; }
  .editing .stack { width: 27px; padding-left: 7px; }
  .editing .big { flex: 1 1 auto; }
  .sigma { font: 700 10px "Liberation Serif", serif; color: #222; }
  .sort { display: flex; align-items: center; height: 22px; }
  .sort-letters { display: grid; font: 11px/11px "Liberation Serif", serif; color: #2c5cae; margin-right: -8px; }
  .sort-letters b + b { color: #8d3b2a; }
  .other .big { padding-left: 8px; }
  .other .big + .big { width: 45px; padding-left: 0; margin-left: 5px; }
  .other .stack { padding-left: 3px; }

  /* Formula bar */
  .formula-bar { display: flex; height: 33px; background: #dde2e8; border-bottom: 3px solid #d5dae1; box-shadow: inset 0 -1px #8d949e; font-family: "Liberation Serif", serif; font-size: 12px; color: #000; }
  .name-box { display: flex; width: 153px; height: 16px; background: #fff; border-bottom: 1px solid #b8bec7; }
  .name-box input { flex: 1; min-width: 0; text-align: center; }
  .name-box button { width: 15px; }
  .name-box .caret { color: #111; margin: 0; }
  .fx { display: flex; align-items: center; justify-content: space-between; width: 63px; height: 16px; padding-right: 5px; border: 1px solid #b8bec7; border-width: 0 1px 1px 0; border-radius: 8px 0 0 8px; }
  .knob { width: 16px; height: 15px; border-left: 1px solid #b0b6be; border-radius: 8px; background: radial-gradient(ellipse at 7px 7px, #b9bfc7 0 2px, transparent 3px); }
  .fx em { font-weight: 700; font-size: 11px; color: #333; }
  .fx small { font-size: 8px; }
  .formula { flex: 1; min-width: 0; padding: 0 0 14px 8px; background: #fff; border-left: 1px solid #aeb4bd; }
  .spin { display: flex; flex-direction: column; width: 11px; }
  .spin button { flex: 1; }
  .spin .collapse { flex: 2; border: 1px solid #b0b6be; }

  /* Sheet */
  .workbook { display: grid; grid-template-columns: minmax(0, 1fr) 14px; flex: 1; }
  table { table-layout: fixed; width: 100%; height: 100%; border-collapse: collapse; font-family: "Liberation Serif", serif; font-size: 13px; line-height: 14px; color: #000; }
  .c-head { width: 24px; }
  .c-wide { width: 93px; }
  .c-narrow { width: 59px; }
  th { padding: 0; font-weight: 400; color: #333; background: #dfe3e8; border: 1px solid #b4bac3; border-top: 0; border-left: 0; overflow: hidden; }
  thead th { height: 18px; background: linear-gradient(#e0e4e9, #dbe0e6); }
  th.partial { padding-left: 23px; text-align: left; }
  .corner i { display: block; margin: 1px 3px 0 auto; width: 0; border: solid transparent; border-width: 5px; border-right-color: #b4bac3; border-bottom-color: #b4bac3; }
  th.picked { background: linear-gradient(#ffd35a, #ffe26a); border-color: #d59b2c; }
  th.filtered { color: #1a22e8; }
  td { height: 17px; padding: 0 6px 0 2px; border: 1px solid #dfe1e4; overflow: hidden; white-space: nowrap; }
  td.num { text-align: right; padding-right: 2px; }
  td.price { padding-right: 6px; }
  td.item { font-size: 12px; }
  td.heading { font-weight: 700; padding: 0 0 0 2px; }
  .filter-head { display: flex; justify-content: space-between; align-items: center; }
  .filter-head button { width: 12px; height: 12px; margin-right: 1px; border: 1px solid #a9afb8; background: linear-gradient(#fff, #e3e6ea); }
  .filter-head .caret { margin: 0; }

  .tri { display: block; width: 0; height: 0; border: 3px solid transparent; }
  .tri.up { border-bottom: 4px solid #555; border-top: 0; }
  .tri.down { border-top: 4px solid #555; border-bottom: 0; }
  .tri.left { border-right: 4px solid #555; border-left: 0; }
  .tri.right { border-left: 4px solid #555; border-right: 0; }
  .vscroll { display: flex; flex-direction: column; background: #e3e6ea; border-right: 3px solid #c9ced5; border-left: 1px solid #b4bac3; }
  .vscroll button { height: 13px; }
  .vscroll .split { height: 6px; border: 1px solid #8f96a0; background: #fff; }
  .vscroll .thumb { display: grid; place-items: center; flex: 1; margin-bottom: 14px; border: 1px solid #9ba2ac; background: linear-gradient(90deg, #fff, #dfe3e8); }
  .vscroll .thumb i { width: 5px; height: 5px; background: repeating-linear-gradient(#888 0 1px, transparent 1px 2px); }

  .sheet-bar { display: flex; height: 12px; background: #dce1e8; border-top: 1px solid #9ba2ac; }
  .sheet-nav { display: flex; width: 45px; padding: 0 2px; border-right: 1px solid #9ba2ac; }
  .sheet-nav button { flex: 1; }
  .sheet-nav i { width: 1px; height: 6px; background: #555; }
  .sheet { width: 42px; background: #fff; font-weight: 700; color: #555; }
  .new-sheet { width: 24px; border: 1px solid #a9afb8; border-width: 0 1px; transform: skewX(-35deg); margin-left: 3px; }
  .new-sheet .icon { transform: skewX(35deg); }
  .hscroll { display: flex; flex: 0 0 41%; margin-left: auto; padding-right: 14px; }
  .hscroll .split { width: 5px; border: 1px solid #8f96a0; background: #fff; }
  .hscroll button { width: 13px; }
  .track { flex: 1; }
  .hscroll .thumb { display: grid; place-items: center; width: 91%; height: 100%; border: 1px solid #9ba2ac; background: linear-gradient(#fff, #dfe3e8); }
  .hscroll .thumb i { width: 5px; height: 5px; background: repeating-linear-gradient(90deg, #888 0 1px, transparent 1px 2px); }

  .status { display: flex; align-items: center; gap: 11px; height: 16px; padding: 0 0 1px 5px; background: linear-gradient(#e2e5e9, #b9bec5); border-top: 1px solid #9ba2ac; border-bottom: 1px solid #777; }
  .macro { width: 26px; height: 12px; margin-left: -4px; border: 1px solid #a2a8b1; border-width: 0 1px; }
  .zoom { position: relative; display: flex; align-items: center; margin-left: auto; padding-right: 3px; }
  .view { width: 14px; height: 13px; margin-right: 58px; background: #fbd46b; border: 1px solid #c98f22; border-radius: 2px; }
  .round { width: 11px; height: 11px; border: 1px solid #777; border-radius: 50%; background: #f2f3f5; }
  .round svg { width: 9px; height: 9px; }
  .zoom input { appearance: none; width: 71px; height: 9px; background: linear-gradient(#888, #888) center / 100% 1px no-repeat; }
  .zoom input::-webkit-slider-thumb { appearance: none; width: 7px; height: 9px; background: #f5f6f7; border: 1px solid #777; border-radius: 0 0 4px 4px; }
  .tooltip { position: absolute; left: 13px; bottom: -1px; width: 63px; padding: 1px 0 1px 2px; border: 1px solid #777; border-radius: 2px; background: linear-gradient(#fff, #e8e9f0); line-height: 11px; white-space: nowrap; color: #555; }

  /* Taskbar */
  .taskbar { display: flex; align-items: center; height: 28px; background: linear-gradient(#2a2c2e, #050607 20%, #000); color: #fff; }
  .start { width: 38px; }
  .explorer { width: 47px; }
  .windows { display: flex; gap: 2px; }
  .windows button { justify-content: flex-start; gap: 4px; width: 93px; height: 27px; padding-left: 5px; border: 1px solid #6b6d6f; border-radius: 2px; background: linear-gradient(#55575a, #26282a 50%, #111); }
  .windows .active { background: linear-gradient(135deg, #b5b5b5, #7a7a7a 60%, #636363); border-color: #aaa; }
  .pinned { display: flex; flex: 1; justify-content: space-between; padding: 0 8px 0 10px; max-width: 210px; }
  .tray { display: flex; gap: 5px; margin-left: auto; }
  time { width: 63px; text-align: center; line-height: 12px; }
  .desktop { width: 9px; height: 28px; border-left: 1px solid #555; background: linear-gradient(90deg, #444, #111); }

  .marker { position: absolute; top: 0; right: 29px; width: 147px; height: 204px; pointer-events: none; }
</style>
